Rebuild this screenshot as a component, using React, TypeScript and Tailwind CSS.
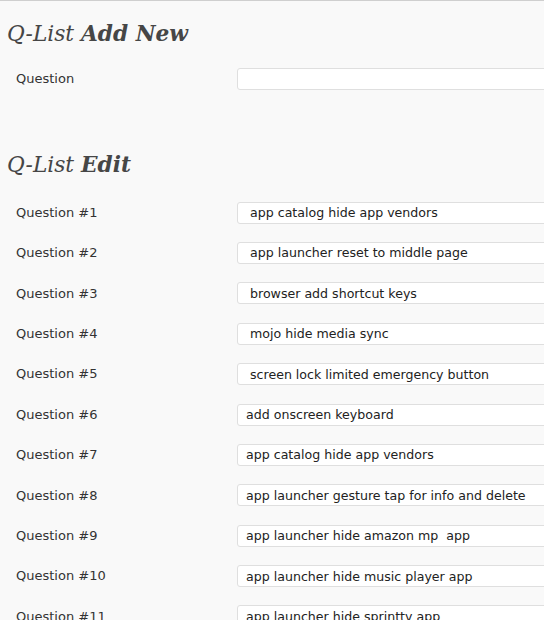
import React from 'react';

const questions = [
  ' app catalog hide app vendors',
  ' app launcher reset to middle page',
  ' browser add shortcut keys',
  ' mojo hide media sync',
  ' screen lock limited emergency button',
  'add onscreen keyboard',
  'app catalog hide app vendors',
  'app launcher gesture tap for info and delete',
  'app launcher hide amazon mp  app',
  'app launcher hide music player app',
  'app launcher hide sprintty app',
];

function Row({ label, value }: { label: string; value: string }) {
  return (
    <div className="flex items-center h-[40.4px]">
      <div className="w-[237px] shrink-0 pl-4 text-[13px] text-[#333]">{label}</div>
      <input
        readOnly
        value={value}
        className="w-[340px] shrink-0 h-[22px] rounded-[3px] border border-[#dfdfdf] bg-white px-[8px] text-[12.6px] text-[#222] outline-none whitespace-pre"
        style={{ fontFamily: 'Verdana, "DejaVu Sans", sans-serif' }}
      />
    </div>
  );
}

export default function App() {
  return (
    <div
      className="min-h-[620px] w-[544px] overflow-hidden bg-[#f9f9f9] border-t border-[#cfcfcf]"
      style={{ fontFamily: 'Verdana, "DejaVu Sans", sans-serif' }}
    >
      <h2 className="pl-[7px] pt-[17px] text-[21.7px] leading-[32px] italic text-[#464646] font-['DejaVu_Serif',serif]">
        Q-List <span className="font-bold">Add New</span>
      </h2>
      <div className="mt-[9px]">
        <Row label="Question" value="" />
      </div>
      <h2 className="pl-[7px] mt-[50px] text-[21.7px] leading-[32px] italic text-[#464646] font-['DejaVu_Serif',serif]">
        Q-List <span className="font-bold">Edit</span>
      </h2>
      <div className="mt-[11px]">
        {questions.map((q, i) => (
          <Row key={i} label={`Question #${i + 1}`} value={q} />
        ))}
      </div>
    </div>
  );
}
